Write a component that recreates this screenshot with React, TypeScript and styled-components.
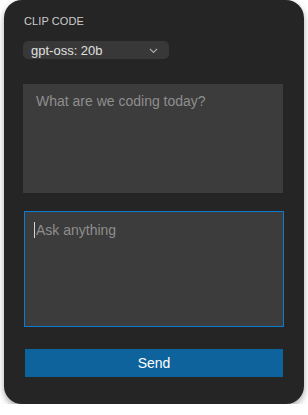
import styled, { createGlobalStyle } from "styled-components";

const GlobalStyle = createGlobalStyle`
    body {
        margin: 0;
        background: #ffffff;
        font-family: "Liberation Sans", Arial, sans-serif;
    }
`;

const Panel = styled.div`
    box-sizing: border-box;
    width: 300px;
    height: 404px;
    margin: 0 4px;
    padding: 14px 21px 27px 19px;
    background-color: #252526;
    border-radius: 18px;
    box-shadow: 0 3px 6px rgba(0, 0, 0, 0.35);
    display: flex;
    flex-direction: column;
`;

const Title = styled.div`
    font-size: 11px;
    line-height: 14px;
    color: #cccccc;
    letter-spacing: 0.1px;
    margin-left: 1px;
`;

const ModelSelect = styled.button`
    box-sizing: border-box;
    margin-top: 13px;
    width: 146px;
    height: 18px;
    padding: 0 11px 0 8px;
    display: flex;
    align-items: center;
    justify-content: space-between;
    background-color: #383838;
    border: none;
    border-radius: 5px;
    color: #e0e0e0;
    font-family: inherit;
    font-size: 13px;
    cursor: pointer;
    svg {
        width: 9px;
        height: 9px;
        color: #b0b0b0;
    }
`;

const Field = styled.div<{ $top: number; $left?: number; $caret?: boolean }>`
    position: relative;
    margin-top: ${(p) => p.$top}px;
    margin-left: ${(p) => p.$left ?? 0}px;
    &::before {
        content: "";
        display: ${(p) => (p.$caret ? "block" : "none")};
        position: absolute;
        left: 10px;
        top: 11px;
        width: 1px;
        height: 16px;
        background: #d4d4d4;
    }
`;

const TextBox = styled.textarea<{ $height: number; $focused?: boolean }>`
    box-sizing: border-box;
    display: block;
    width: 260px;
    height: ${(p) => p.$height}px;
    resize: none;
    outline: none;
    background-color: #3c3c3c;
    color: #cccccc;
    font-family: inherit;
    font-size: 14px;
    line-height: 18px;
    border: 1px solid ${(p) => (p.$focused ? "#0a7bd0" : "transparent")};
    padding: ${(p) => (p.$focused ? "9px 11px" : "7px 12px")};
    &::placeholder {
        color: #8e8e8e;
    }
`;

const SendBtn = styled.button`
    box-sizing: border-box;
    width: 258px;
    height: 28px;
    margin-top: 22px;
    margin-left: 2px;
    border: none;
    background-color: #0e639c;
    color: #ffffff;
    font-family: inherit;
    font-size: 14px;
    cursor: pointer;
`;

const App = () => {
    return (
        <>
            <GlobalStyle />
            <Panel>
                <Title>CLIP CODE</Title>
                <ModelSelect>
                    <span>gpt-oss: 20b</span>
                    <svg viewBox="0 0 10 10" fill="none" stroke="currentColor" strokeWidth="1.2">
                        <path d="M1 3.2l4 4 4-4" />
                    </svg>
                </ModelSelect>
                <Field $top={25}>
                    <TextBox $height={109} placeholder="What are we coding today?" />
                </Field>
                <Field $top={18} $left={1} $caret>
                    <TextBox $height={116} $focused placeholder="Ask anything" />
                </Field>
                <SendBtn>Send</SendBtn>
            </Panel>
        </>
    );
};

export default App;
